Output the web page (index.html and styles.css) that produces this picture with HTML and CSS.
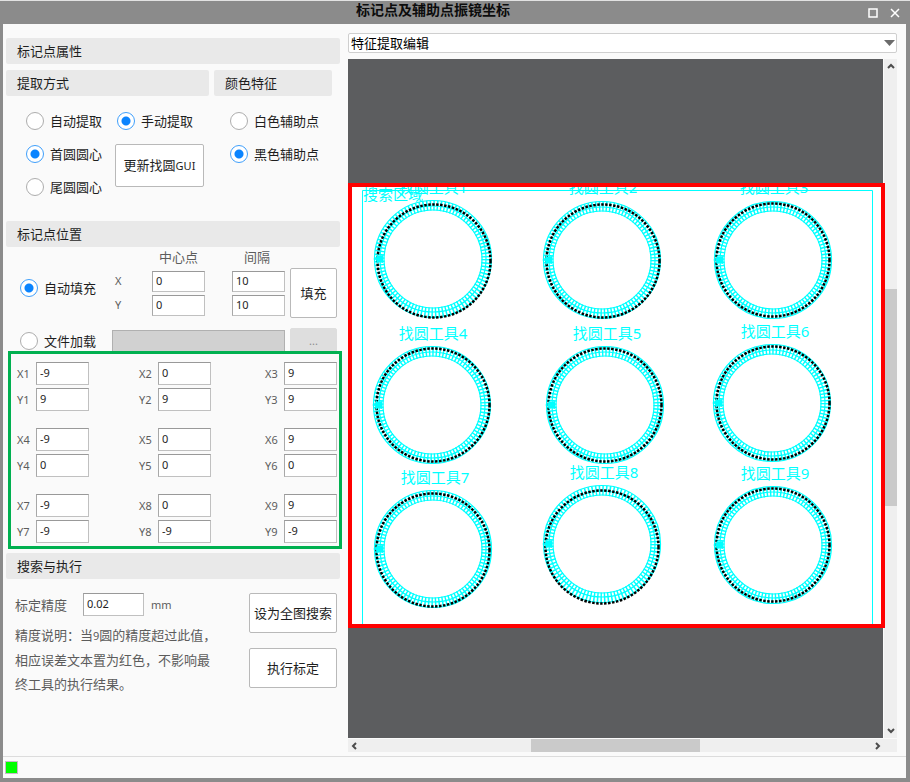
FILE: index.html
```html
<!DOCTYPE html>
<html lang="zh-CN">
<head>
<meta charset="utf-8">
<title>标记点及辅助点振镜坐标</title>
<link rel="stylesheet" href="styles.css">
</head>
<body>
<div class="window">
  <header class="titlebar">
    <h1 class="title">标记点及辅助点振镜坐标</h1>
    <div class="window-buttons">
      <button class="window-button" type="button" aria-label="最大化"><svg width="10" height="10" viewBox="0 0 10 10"><rect x="1" y="1" width="8" height="8"/></svg></button>
      <button class="window-button" type="button" aria-label="关闭"><svg width="10" height="10" viewBox="0 0 10 10"><path d="M1 1L9 9M9 1L1 9"/></svg></button>
    </div>
  </header>

  <main class="body">
    <form class="panel">
      <h2 class="heading">标记点属性</h2>
      <div class="props">
        <section>
          <h3 class="heading">提取方式</h3>
          <div class="extract">
            <label class="choice"><input type="radio" name="mode">自动提取</label>
            <label class="choice"><input type="radio" name="mode" checked>手动提取</label>
            <label class="choice"><input type="radio" name="center" checked>首圆圆心</label>
            <button class="button update" type="button">更新找圆<small>GUI</small></button>
            <label class="choice"><input type="radio" name="center">尾圆圆心</label>
          </div>
        </section>
        <section class="color">
          <h3 class="heading">颜色特征</h3>
          <div class="color-choices">
            <label class="choice"><input type="radio" name="color">白色辅助点</label>
            <label class="choice"><input type="radio" name="color" checked>黑色辅助点</label>
          </div>
        </section>
      </div>

      <h2 class="heading">标记点位置</h2>
      <div class="fill">
        <span class="caption center-caption">中心点</span>
        <span class="caption gap-caption">间隔</span>
        <label class="choice auto-fill"><input type="radio" name="source" checked>自动填充</label>
        <div class="fill-row">
          <span class="axis">X</span>
          <input class="field" type="text" value="0" aria-label="中心点 X">
          <input class="field" type="text" value="10" aria-label="间隔 X">
        </div>
        <div class="fill-row">
          <span class="axis">Y</span>
          <input class="field" type="text" value="0" aria-label="中心点 Y">
          <input class="field" type="text" value="10" aria-label="间隔 Y">
        </div>
        <button class="button fill-button" type="button">填充</button>
      </div>
      <div class="file">
        <label class="choice"><input type="radio" name="source">文件加载</label>
        <input class="field file-path" type="text" aria-label="文件路径" disabled>
        <button class="button browse" type="button" disabled>...</button>
      </div>

      <div class="points">
        <div class="point"><label for="x1">X1</label><input class="field" id="x1" type="text" value="-9"><label for="y1">Y1</label><input class="field" id="y1" type="text" value="9"></div>
        <div class="point"><label for="x2">X2</label><input class="field" id="x2" type="text" value="0"><label for="y2">Y2</label><input class="field" id="y2" type="text" value="9"></div>
        <div class="point"><label for="x3">X3</label><input class="field" id="x3" type="text" value="9"><label for="y3">Y3</label><input class="field" id="y3" type="text" value="9"></div>
        <div class="point"><label for="x4">X4</label><input class="field" id="x4" type="text" value="-9"><label for="y4">Y4</label><input class="field" id="y4" type="text" value="0"></div>
        <div class="point"><label for="x5">X5</label><input class="field" id="x5" type="text" value="0"><label for="y5">Y5</label><input class="field" id="y5" type="text" value="0"></div>
        <div class="point"><label for="x6">X6</label><input class="field" id="x6" type="text" value="9"><label for="y6">Y6</label><input class="field" id="y6" type="text" value="0"></div>
        <div class="point"><label for="x7">X7</label><input class="field" id="x7" type="text" value="-9"><label for="y7">Y7</label><input class="field" id="y7" type="text" value="-9"></div>
        <div class="point"><label for="x8">X8</label><input class="field" id="x8" type="text" value="0"><label for="y8">Y8</label><input class="field" id="y8" type="text" value="-9"></div>
        <div class="point"><label for="x9">X9</label><input class="field" id="x9" type="text" value="9"><label for="y9">Y9</label><input class="field" id="y9" type="text" value="-9"></div>
      </div>

      <h2 class="heading">搜索与执行</h2>
      <div class="run">
        <div class="run-info">
          <div class="precision">
            <label for="precision">标定精度</label>
            <input class="field" id="precision" type="text" value="0.02">
            <small>mm</small>
          </div>
          <p class="note">精度说明：当<small>9</small>圆的精度超过此值，<br>相应误差文本置为红色，不影响最终工具的执行结果。</p>
        </div>
        <div class="run-buttons">
          <button class="button" type="button">设为全图搜索</button>
          <button class="button" type="button">执行标定</button>
        </div>
      </div>
    </form>

    <section class="viewer">
      <div class="combo">
        <select aria-label="编辑模式"><option>特征提取编辑</option></select>
        <svg class="combo-arrow" width="11" height="6" viewBox="0 0 11 6"><path d="M0 0H11L5.500 6Z"/></svg>
      </div>
      <div class="stage">
        <div class="canvas">
          <svg class="image" viewBox="352 187 529 437" role="img" aria-label="找圆结果">
            <defs>
              <g id="caliper">
                <circle class="ticks" r="53.500"/>
                <circle class="rail" r="58.500"/>
                <circle class="rail" r="53"/>
                <circle class="rail" r="49"/>
              </g>
              <circle id="edge" class="edge" r="56.500"/>
              <path id="start" class="start" d="M-60 0L-57 -1L-56 -5L-54 -3L-50 -4V4L-54 3L-56 5L-57 1Z"/>
            </defs>
            <path class="region" d="M362.500 630V190.500H872.500V630"/>
            <text class="tag" x="363" y="200">搜索区域</text>
            <g class="tag tool">
              <text x="433" y="193">找圆工具1</text>
              <text x="603" y="193">找圆工具2</text>
              <text x="774" y="193">找圆工具3</text>
              <text x="433" y="339">找圆工具4</text>
              <text x="607" y="339">找圆工具5</text>
              <text x="775" y="337">找圆工具6</text>
              <text x="435" y="483">找圆工具7</text>
              <text x="604" y="478">找圆工具8</text>
              <text x="775" y="479">找圆工具9</text>
            </g>
            <use href="#caliper" x="433" y="259"/><use href="#edge" x="434" y="261"/><use href="#start" x="433" y="259"/>
            <use href="#caliper" x="602" y="260"/><use href="#edge" x="603" y="261"/><use href="#start" x="602" y="260"/>
            <use href="#caliper" x="773" y="260"/><use href="#edge" x="773" y="260"/><use href="#start" x="773" y="260"/>
            <use href="#caliper" x="432" y="405"/><use href="#edge" x="433" y="405"/><use href="#start" x="432" y="405"/>
            <use href="#caliper" x="605" y="405"/><use href="#edge" x="605" y="405"/><use href="#start" x="605" y="405"/>
            <use href="#caliper" x="772" y="403"/><use href="#edge" x="773" y="403"/><use href="#start" x="772" y="403"/>
            <use href="#caliper" x="433" y="549"/><use href="#edge" x="433" y="550"/><use href="#start" x="433" y="549"/>
            <use href="#caliper" x="602" y="544"/><use href="#edge" x="602" y="547"/><use href="#start" x="602" y="544"/>
            <use href="#caliper" x="773" y="545"/><use href="#edge" x="773" y="545"/><use href="#start" x="773" y="545"/>
          </svg>
        </div>
        <div class="scroll vertical">
          <svg width="8" height="14" viewBox="0 0 8 14"><path d="M1 9L4 6L7 9"/></svg>
          <span class="thumb"></span>
          <svg width="8" height="14" viewBox="0 0 8 14"><path d="M1 5L4 8L7 5"/></svg>
        </div>
        <div class="scroll horizontal">
          <svg width="14" height="8" viewBox="0 0 14 8"><path d="M8 1L5 4L8 7"/></svg>
          <span class="thumb"></span>
          <svg width="14" height="8" viewBox="0 0 14 8"><path d="M6 1L9 4L6 7"/></svg>
        </div>
      </div>
    </section>
  </main>

  <footer class="status"><span class="lamp"></span></footer>
</div>
</body>
</html>
```

FILE: styles.css
```css
* {
  box-sizing: border-box;
}

body {
  margin: 0;
  font: 13px/18px "Noto Sans", "Noto Sans CJK SC", sans-serif;
  color: #1e1e1e;
}

h1, h2, h3, p {
  margin: 0;
}

button, input, select {
  font: inherit;
  color: inherit;
}

small {
  font-size: 11px;
}

.window {
  display: flex;
  flex-direction: column;
  min-height: 100vh;
  border: solid #8b8b8b;
  border-width: 0 4px 4px 3px;
  background: #fafafa;
}

/* Title bar */
.titlebar {
  display: flex;
  justify-content: space-between;
  height: 24px;
  margin: 0 -4px 0 -3px;
  padding: 0 10px 0 356px;
  border-top: 1px solid #e2e2e2;
  background: #8b8b8b;
}

.title {
  font-size: 14px;
  line-height: 18px;
  font-weight: 700;
  color: #0c0c0c;
}

.window-buttons {
  display: flex;
  align-items: center;
  gap: 12px;
}

.window-button {
  display: flex;
  padding: 0;
  border: 0;
  background: none;
}

.window-button svg {
  fill: none;
  stroke: #fff;
  stroke-width: 1.5;
}

/* Page body */
.body {
  display: grid;
  grid-template-columns: 336px minmax(0, 1fr);
  gap: 6px;
  flex: 1;
  padding: 9px 9px 4px 3px;
}

.panel {
  padding-top: 5px;
}

.heading {
  margin-right: 2px;
  padding: 4px 11px;
  border-radius: 2px;
  background: #e9e9e9;
  font-size: 13px;
  line-height: 18px;
  font-weight: 400;
}

.choice {
  display: flex;
  align-items: center;
  gap: 6px;
  white-space: nowrap;
}

.choice input {
  appearance: none;
  flex: none;
  width: 18px;
  height: 18px;
  margin: 0;
  border: 1px solid #adadad;
  border-radius: 50%;
  background: #fff;
}

.choice input:checked {
  border-color: #3f9ffb;
  background: radial-gradient(circle, #0a84ff 4px, #fff 5px);
}

.button {
  padding: 0;
  border: 1px solid #b9b9b9;
  border-radius: 2px;
  background: #fff;
}

.field {
  width: 53px;
  height: 23px;
  padding: 0 3px 2px;
  border: 1px solid #c0c0c0;
  border-top-color: #999;
  border-left-color: #a8a8a8;
  border-radius: 0;
  background: #fff;
  font-size: 11px;
}

/* Marker properties */
.props {
  display: grid;
  grid-template-columns: 205px 120px;
  gap: 3px;
  padding: 6px 0 17px;
}

.extract {
  display: grid;
  grid-template-columns: 91px 87px;
  grid-auto-rows: 33px;
  padding: 8px 0 1px 20px;
}

.update {
  grid-row: 2 / span 2;
  grid-column: 2;
  justify-self: end;
  align-self: start;
  width: 89px;
  height: 43px;
  margin-top: 7px;
}

.color-choices {
  display: grid;
  grid-auto-rows: 33px;
  padding: 8px 0 0 16px;
}

/* Marker position */
.fill {
  display: grid;
  grid-template-columns: 92px 1fr 47px;
  grid-template-rows: 21px 21px 21px;
  row-gap: 3px;
  padding: 0 5px 0 14px;
}

.caption {
  grid-row: 1;
  grid-column: 2;
  padding-top: 1px;
  color: #5c5c5c;
}

.center-caption {
  padding-left: 47px;
}

.gap-caption {
  padding-left: 132px;
}

.auto-fill {
  grid-row: 2 / span 2;
  grid-column: 1;
  align-self: start;
  padding-top: 8px;
}

.fill-row {
  display: grid;
  grid-template-columns: 40px 53px 53px;
  grid-column: 2;
}

.fill-row .field {
  height: 21px;
}

.fill-row .field:last-child {
  margin-left: 27px;
}

.axis {
  padding-left: 3px;
  color: #5c5c5c;
  font-size: 11px;
  line-height: 20px;
}

.fill-button {
  grid-row: 2 / span 2;
  grid-column: 3;
  margin: -3px 0 -2px;
}

.file {
  display: grid;
  grid-template-columns: 92px 173px 47px;
  height: 23px;
  margin-top: 12px;
  padding-left: 14px;
}

.file-path {
  width: auto;
  margin-top: 2px;
  border-color: #b0b0b0;
  background: #d1d1d1;
}

.browse {
  height: 26px;
  margin-left: 5px;
  margin-right: -5px;
  border-color: #dedede;
  background: #dedede;
  color: #8c8c8c;
  font-size: 11px;
}

/* Point coordinates */
.points {
  position: relative;
  display: grid;
  grid-template-columns: 122fr 126fr 72fr;
  row-gap: 17px;
  margin: 0 0 4px 2px;
  padding: 8px 2px 3px 6px;
  border: 3px solid #00b050;
  background: #fafafa;
}

.point {
  display: grid;
  grid-template-columns: 19px 53px;
  row-gap: 3px;
  align-items: center;
  color: #5c5c5c;
  font-size: 11px;
}

.point .field,
.precision .field {
  color: #1e1e1e;
}

/* Search and run */
.run {
  display: flex;
  justify-content: space-between;
  padding: 14px 5px 0 9px;
  color: #5c5c5c;
}

.precision {
  display: flex;
  align-items: center;
  margin-bottom: 7px;
}

.precision .field {
  width: 61px;
  margin: 0 7px 0 16px;
}

.note {
  max-width: 206px;
  line-height: 24px;
}

.run-buttons {
  display: grid;
  grid-auto-rows: 40px;
  gap: 15px;
  width: 88px;
  color: #1e1e1e;
}

/* Image viewer */
.viewer {
  display: flex;
  flex-direction: column;
  gap: 6px;
  min-width: 0;
}

.combo {
  position: relative;
  display: flex;
}

.combo select {
  appearance: none;
  width: 100%;
  height: 20px;
  padding: 0 2px;
  border: 1px solid #cfcfcf;
  border-radius: 2px;
  background: #fff;
  color: #000;
  line-height: 18px;
}

.combo-arrow {
  position: absolute;
  top: 7px;
  right: 2px;
  fill: #6b6b6b;
  pointer-events: none;
}

.stage {
  display: grid;
  grid-template-columns: minmax(0, 1fr) 13px;
  grid-template-rows: minmax(0, 1fr) 13px;
  gap: 1px;
  flex: 1;
}

.canvas {
  display: grid;
  grid-template-rows: minmax(0, 124fr) minmax(0, 445fr) minmax(0, 110fr);
  background: #5c5d5f;
}

.image {
  position: relative;
  grid-row: 2;
  width: calc(100% + 2px);
  height: 100%;
  border: 4px solid #f00;
  background: #fff;
}

.region,
.ticks,
.rail,
.edge {
  fill: none;
  stroke: #0ff;
}

.ticks {
  stroke-width: 10;
  stroke-dasharray: 1.5 2;
}

.rail {
  stroke-width: 1.2;
}

.edge {
  stroke: #000;
  stroke-width: 2.5;
  stroke-dasharray: 2.5 1.5;
}

.start,
.tag {
  fill: #0ff;
}

.tag {
  font-size: 15px;
}

.tool {
  text-anchor: middle;
}

.scroll {
  display: grid;
  background: #efefef;
}

.scroll svg {
  fill: none;
  stroke: #4c4c4c;
  stroke-width: 2;
}

.vertical {
  grid-template-rows: 14px 216fr 217fr 218fr 14px;
  justify-items: center;
}

.vertical .thumb {
  grid-row: 3;
  width: 100%;
}

.vertical svg:last-child {
  grid-row: 5;
}

.horizontal {
  grid-column: 1 / -1;
  grid-template-columns: 14px 169fr 169fr 170fr 14px;
  align-items: center;
  padding-right: 13px;
}

.horizontal .thumb {
  grid-column: 3;
  height: 100%;
}

.horizontal svg:last-child {
  grid-column: 5;
}

.thumb {
  background: #cacaca;
}

/* Status bar */
.status {
  display: flex;
  align-items: center;
  height: 22px;
  padding-left: 2px;
  border-top: 1px solid #dcdcdc;
}

.lamp {
  width: 13px;
  height: 13px;
  border: 1px solid #c9b8c9;
  background: #0f0;
}
```
